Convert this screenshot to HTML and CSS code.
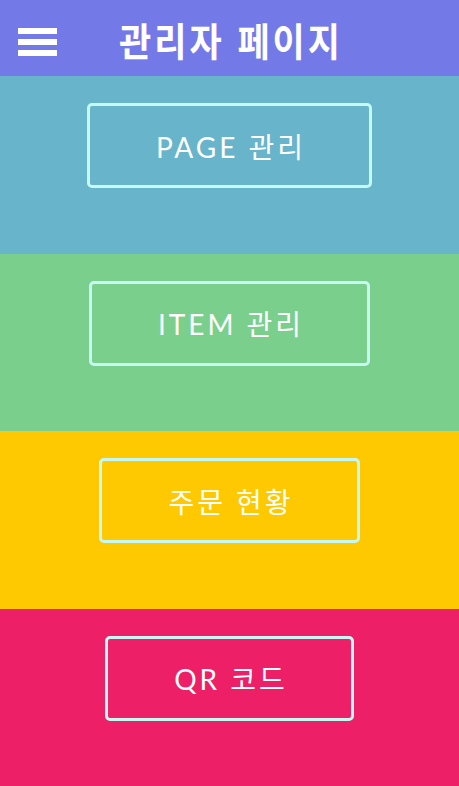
FILE: index.html
```html
<!DOCTYPE html>
<html lang="ko">
<head>
<meta charset="utf-8">
<title>관리자 페이지</title>
<link rel="stylesheet" href="styles.css">
</head>
<body>
<div class="app">
  <header class="topbar">
    <div class="menu" aria-label="menu">
      <span class="bar"></span>
      <span class="bar"></span>
      <span class="bar"></span>
    </div>
    <h1 class="title">관리자 페이지</h1>
    <div class="spacer"></div>
  </header>
  <main class="sections">
    <section class="panel panel-blue"><a class="btn">PAGE 관리</a></section>
    <section class="panel panel-green"><a class="btn">ITEM 관리</a></section>
    <section class="panel panel-yellow"><a class="btn">주문 현황</a></section>
    <section class="panel panel-pink"><a class="btn">QR 코드</a></section>
  </main>
</div>
</body>
</html>
```

FILE: styles.css
```css
html, body {
  margin: 0;
  padding: 0;
  height: 100%;
}
body {
  font-family: Lato, "Noto Sans CJK KR", sans-serif;
}
.app {
  display: flex;
  flex-direction: column;
  height: 786px;
}
.topbar {
  height: 76px;
  flex: 0 0 76px;
  background: #7479e8;
  display: grid;
  grid-template-columns: 1fr auto 1fr;
  align-items: center;
}
.menu {
  display: flex;
  flex-direction: column;
  gap: 5px;
  width: 39px;
  margin-left: 18px;
  margin-top: 8px;
}
.bar {
  display: block;
  height: 6px;
  background: #ffffff;
}
.title {
  margin: 0;
  color: #ffffff;
  font-family: "Noto Sans CJK KR", sans-serif;
  font-weight: 700;
  font-size: 35px;
  line-height: 1;
  letter-spacing: 3px;
  text-indent: 3px;
  transform: scaleY(1.12);
}
.sections {
  flex: 1;
  display: flex;
  flex-direction: column;
}
.panel {
  flex: 1;
  display: flex;
  justify-content: center;
  align-items: flex-start;
  padding-top: 27px;
}
.panel-blue { background: #67b4cb; }
.panel-green { background: #7acf8d; }
.panel-yellow { background: #fec901; }
.panel-pink { background: #ed1f66; }
.btn {
  display: flex;
  align-items: center;
  justify-content: center;
  height: 79px;
  padding: 0 63px 0 66px;
  border: 3px solid #c6f9f4;
  border-radius: 5px;
  color: #ffffff;
  font-size: 28px;
  letter-spacing: 3px;
  white-space: nowrap;
}
```
